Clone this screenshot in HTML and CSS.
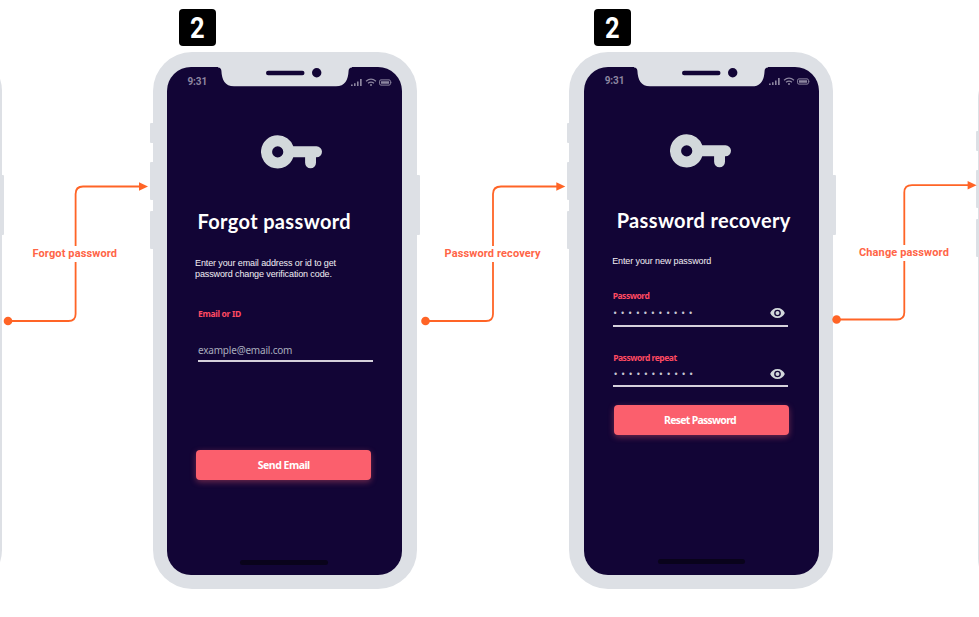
FILE: index.html
```html
<!DOCTYPE html>
<html lang="en">
<head>
<meta charset="utf-8">
<title>Password flow</title>
<link rel="stylesheet" href="styles.css">
</head>
<body>
<svg class="defs" width="0" height="0" aria-hidden="true">
  <defs>
    <symbol id="key" viewBox="0 0 61 34">
      <path fill-rule="evenodd" d="M16.7.3a16.6 16.6 0 0 1 15.6 11h23.2a5.5 5.5 0 0 1 0 11H55v5.5a5.4 5.4 0 0 1-10.900 0v-5.500H32.300A16.600 16.600 0 1 1 16.700.3zm0 11a5.600 5.600 0 1 0 0 11.200 5.600 5.600 0 0 0 0-11.200z"/>
    </symbol>
    <symbol id="notch" viewBox="0 0 136 20">
      <path class="notch-shape" d="M1 0v.4c2.400 0 3.200 1.300 3.400 3.300C4.800 13 8 19.300 17 19.300h102c9 0 12.200-6.300 12.600-15.600.2-2 1-3.300 3.400-3.300V0z"/>
      <rect class="notch-hole" x="49" y="3.800" width="38.500" height="4.500" rx="2.200"/>
      <circle class="notch-hole" cx="99.700" cy="5.700" r="4.700"/>
    </symbol>
    <symbol id="signals" viewBox="0 0 42 9">
      <path d="M0 6.600h1.700V8H0zM3 5.300h1.600V8H3zM6 3.500h1.600V8H6zM9 1h1.700v7H9z"/>
      <path class="wave" d="M15 3.200q5-4 10 0M17 5.200q3-2.300 6 0"/>
      <circle cx="20" cy="7" r="1"/>
      <rect class="cell" x="28.600" y="1.900" width="10.800" height="5.200" rx="1.300"/>
      <path d="M30 3.300h8v2.400h-8zM40.300 3.300q1 1.200 0 2.400z"/>
    </symbol>
    <symbol id="eye" viewBox="1 4.500 22 15">
      <path d="M12 4.500C7 4.500 2.700 7.600 1 12c1.700 4.400 6 7.500 11 7.500s9.300-3.100 11-7.500c-1.700-4.400-6-7.500-11-7.500zM12 17a5 5 0 1 1 0-10 5 5 0 0 1 0 10zm0-8a3 3 0 1 0 0 6 3 3 0 0 0 0-6z"/>
    </symbol>
  </defs>
</svg>

<main class="canvas">
  <div class="phone phone-before"><i class="key-a"></i><i class="key-b"></i><i class="key-c"></i><i class="key-power"></i></div>
  <div class="phone phone-after"><i class="key-a"></i><i class="key-b"></i><i class="key-c"></i><i class="key-power"></i></div>

  <div class="step step-forgot"><span>2</span></div>
  <section class="phone phone-forgot">
    <i class="key-a"></i><i class="key-b"></i><i class="key-c"></i><i class="key-power"></i>
    <svg class="notch"><use href="#notch"/></svg>
    <div class="screen">
      <header class="status"><span class="time">9:31</span><svg class="signals"><use href="#signals"/></svg></header>
      <svg class="key-icon"><use href="#key"/></svg>
      <h1>Forgot password</h1>
      <p class="hint">Enter your email address or id to get<br>password change verification code.</p>
      <div class="field email">
        <label>Email or ID</label>
        <div class="entry"><span>example@email.com</span></div>
      </div>
      <button>Send Email</button>
      <div class="home"></div>
    </div>
  </section>

  <div class="step step-recovery"><span>2</span></div>
  <section class="phone phone-recovery">
    <i class="key-a"></i><i class="key-b"></i><i class="key-c"></i><i class="key-power"></i>
    <svg class="notch"><use href="#notch"/></svg>
    <div class="screen">
      <header class="status"><span class="time">9:31</span><svg class="signals"><use href="#signals"/></svg></header>
      <svg class="key-icon"><use href="#key"/></svg>
      <h1>Password recovery</h1>
      <p class="hint">Enter your new password</p>
      <div class="field password">
        <label>Password</label>
        <div class="entry"><span class="dots">•••••••••••</span><svg class="eye"><use href="#eye"/></svg></div>
      </div>
      <div class="field password repeat">
        <label>Password repeat</label>
        <div class="entry"><span class="dots">•••••••••••</span><svg class="eye"><use href="#eye"/></svg></div>
      </div>
      <button>Reset Password</button>
      <div class="home"></div>
    </div>
  </section>

  <svg class="links" viewBox="0 0 979 617">
    <path class="link" d="M8 321H68.500Q75.600 321 75.600 314V194Q75.600 186.500 83 186.500H140"/>
    <circle cx="8" cy="321" r="4.300"/><path d="M139 182.300l9 4.200-9 4.200z"/>
    <path class="link" d="M425.500 321H486Q493 321 493 314V194Q493 186.500 501 186.500H557"/>
    <circle cx="425.500" cy="321" r="4.300"/><path d="M556.300 182.300l9 4.200-9 4.200z"/>
    <path class="link" d="M836.600 319.500H897Q904.300 319.500 904.300 312.500V192.500Q904.300 185.200 912 185.200H969"/>
    <circle cx="836.600" cy="319.500" r="4.300"/><path d="M967.600 181l9 4.200-9 4.200z"/>
  </svg>
  <div class="link-label label-forgot">Forgot password</div>
  <div class="link-label label-recovery">Password recovery</div>
  <div class="link-label label-change">Change password</div>
</main>
</body>
</html>
```
FILE: styles.css
```css
* { box-sizing: border-box; }
body { margin: 0; background: #fff; font-family: "Liberation Sans", sans-serif; }
.defs { position: absolute; }
.canvas { position: relative; width: 979px; height: 617px; overflow: hidden; }

/* Phones on the canvas */
.phone {
  position: absolute;
  top: 52.300px;
  width: 264.300px;
  height: 537.200px;
  padding: 15px 14.700px;
  border-radius: 39px;
  background: #dde0e5;
}
.phone-before { left: -262.800px; }
.phone-after { left: 978px; top: 60px; }
.phone-forgot { left: 152.800px; }
.phone-recovery { left: 569px; }
.phone i { position: absolute; left: -2.500px; width: 4px; background: #dde0e5; border-radius: 1px; }
.phone .key-a { top: 71px; height: 20px; }
.phone .key-b { top: 110px; height: 37.500px; }
.phone .key-c { top: 159px; height: 37.500px; }
.phone .key-power { left: auto; right: -2.500px; top: 122.700px; height: 60px; }
.notch { position: absolute; left: 63.800px; top: 14.700px; width: 136px; height: 20px; }
.notch-shape { fill: #dde0e5; }
.notch-hole { fill: #120536; }

.screen {
  display: flex;
  flex-direction: column;
  height: 507.500px;
  padding-left: 28px;
  border-radius: 24px;
  background: #120536;
}
.status {
  display: flex;
  justify-content: space-between;
  align-items: center;
  height: 29px;
  padding: 0 9.500px 0 0;
  margin-left: -8px;
}
.time { font: bold 10px/12px Roboto, sans-serif; letter-spacing: -.1px; color: #8d86a0; }
.signals { width: 42px; height: 9px; margin-top: 1px; fill: #8d86a0; }
.wave { fill: none; stroke: #8d86a0; stroke-width: 1.200; }
.cell { fill: none; stroke: #8d86a0; stroke-width: 1; }
.key-icon { width: 61px; height: 34px; margin: 39px 0 0 65.500px; fill: #d2d8db; }
h1 {
  height: 28px;
  margin: 38px 0 0 2px;
  font: bold 20px/28px Lato, sans-serif;
  letter-spacing: .35px;
  color: #fff;
  white-space: nowrap;
}
.hint { margin: 22.500px 0 0 -.5px; font-size: 9px; line-height: 11px; letter-spacing: -.11px; color: #f3f0f5; white-space: nowrap; }
.field { width: 175px; margin-left: 2.500px; }
.field label { display: block; height: 12px; font: bold 8.500px/12px "Noto Sans", sans-serif; letter-spacing: -.3px; color: #ff4a62; }
.entry { display: flex; justify-content: space-between; align-items: center; height: 18px; border-bottom: 2px solid #d5d1db; }
.email { margin-top: 28px; }
.email .entry { margin-top: 24.500px; padding-bottom: 4px; font: 10px/12px "Noto Sans", sans-serif; letter-spacing: -.2px; color: #a9adbd; }
button {
  width: 175.500px;
  height: 30px;
  margin: 87.500px 0 0 .5px;
  padding: 0;
  border: 0;
  border-radius: 4px;
  background: #fb5f6d;
  box-shadow: 0 2px 6px rgba(251, 95, 109, .4);
  font: bold 10.500px/30px "Noto Sans", sans-serif;
  letter-spacing: -.5px;
  color: #fff;
}
.home { width: 87.500px; height: 5px; margin: 80px 0 0 45px; border-radius: 3px; background: #09031b; }

.phone-recovery .status { height: 27px; margin-left: -7px; padding-right: 8px; }
.phone-recovery .key-icon { margin: 40px 0 0 58.700px; }
.phone-recovery h1 { margin-left: 5px; }
.phone-recovery .hint { margin-top: 22px; margin-left: .5px; }
.password { margin: 23px 0 0 1px; }
.password label { letter-spacing: -.48px; }
.password .entry { height: 25px; }
.password .dots { margin-top: 1px; }
.password .eye { margin-top: -1px; }
.repeat { margin: 25px 0 0 1.500px; }
.repeat .entry { height: 22.500px; }
.dots { font: 8px/12px "DejaVu Sans", sans-serif; letter-spacing: 2.850px; color: #c8c7d3; }
.eye { width: 15px; height: 10px; margin-right: 3px; fill: #d2d8db; }
.phone-recovery button { margin: 18.500px 0 0 2px; letter-spacing: -.72px; padding-right: 3px; }
.phone-recovery .home { margin: 124px 0 0 46px; }

/* Step badges */
.step {
  position: absolute;
  top: 8.500px;
  width: 37.500px;
  height: 37.500px;
  border-radius: 4px;
  background: #000;
  color: #fff;
  font: bold 29px/38px Roboto, sans-serif;
  text-align: center;
}
.step span { display: inline-block; transform: scaleX(.88); }
.step-forgot { left: 178.500px; }
.step-recovery { left: 593.500px; }

/* Flow connectors */
.links { position: absolute; left: 0; top: 0; width: 979px; height: 617px; fill: #ff6426; }
.link { fill: none; stroke: #ff6426; stroke-width: 1.800; }
.link-label {
  position: absolute;
  height: 16px;
  background: #fff;
  font: bold 11px/16px Roboto, sans-serif;
  letter-spacing: .12px;
  color: #ff6547;
  white-space: nowrap;
}
.label-forgot { left: 32.500px; top: 245.500px; }
.label-recovery { left: 444.500px; top: 246px; }
.label-change { left: 859px; top: 244.500px; }
```
